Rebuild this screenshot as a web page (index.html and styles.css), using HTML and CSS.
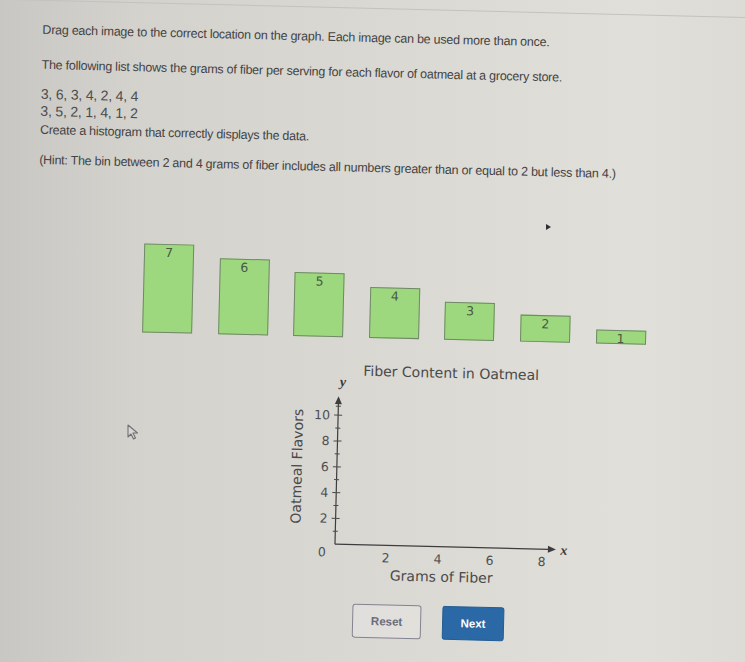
FILE: index.html
```html
<!DOCTYPE html>
<html lang="en">
<head>
    <meta charset="UTF-8">
    <meta name="viewport" content="width=device-width, initial-scale=1.0">
    <title>Fiber Content in Oatmeal</title>
    <link rel="stylesheet" href="styles.css">
</head>
<body>
    <div class="page">
        <div class="frame">
            <p class="line intro">Drag each image to the correct location on the graph. Each image can be used more than once.</p>
            <p class="line lead">The following list shows the grams of fiber per serving for each flavor of oatmeal at a grocery store.</p>
            <div class="data">
                <div>3, 6, 3, 4, 2, 4, 4</div>
                <div>3, 5, 2, 1, 4, 1, 2</div>
            </div>
            <p class="line task">Create a histogram that correctly displays the data.</p>
            <p class="line hint">(Hint: The bin between 2 and 4 grams of fiber includes all numbers greater than or equal to 2 but less than 4.)</p>

            <!-- draggable bars, one per frequency -->
            <div class="tiles">
                <div class="tile" style="height: 89px;">7</div>
                <div class="tile" style="height: 76px;">6</div>
                <div class="tile" style="height: 64px;">5</div>
                <div class="tile" style="height: 51px;">4</div>
                <div class="tile" style="height: 38px;">3</div>
                <div class="tile" style="height: 27px;">2</div>
                <div class="tile" style="height: 14px;">1</div>
            </div>

            <svg class="chart" width="300" height="225" viewBox="0 0 300 225">
                <text class="chart-title" x="172" y="17" text-anchor="middle">Fiber Content in Oatmeal</text>
                <text class="axis-var" x="64" y="28" text-anchor="middle">y</text>
                <text class="axis-var" x="289" y="191" text-anchor="middle">x</text>

                <!-- axes -->
                <line class="axis" x1="60" y1="44" x2="60" y2="186"/>
                <line class="axis" x1="60" y1="186" x2="274" y2="186"/>
                <polygon class="arrow" points="60,38 56.5,46 63.5,46"/>
                <polygon class="arrow" points="281,186 273,182.5 273,189.5"/>

                <!-- y ticks, one per flavor -->
                <g class="ticks">
                    <line x1="57.5" y1="173.1" x2="62.5" y2="173.1"/>
                    <line x1="56" y1="160.2" x2="64" y2="160.2"/>
                    <line x1="57.5" y1="147.3" x2="62.5" y2="147.3"/>
                    <line x1="56" y1="134.4" x2="64" y2="134.4"/>
                    <line x1="57.5" y1="121.5" x2="62.5" y2="121.5"/>
                    <line x1="56" y1="108.6" x2="64" y2="108.6"/>
                    <line x1="57.5" y1="95.7" x2="62.5" y2="95.7"/>
                    <line x1="56" y1="82.8" x2="64" y2="82.8"/>
                    <line x1="57.5" y1="69.9" x2="62.5" y2="69.9"/>
                    <line x1="56" y1="57" x2="64" y2="57"/>
                    <line x1="57.5" y1="48" x2="62.5" y2="48"/>
                </g>

                <g class="tick-labels">
                    <text x="52" y="61.5" text-anchor="end">10</text>
                    <text x="52" y="87.3" text-anchor="end">8</text>
                    <text x="52" y="113.1" text-anchor="end">6</text>
                    <text x="52" y="138.9" text-anchor="end">4</text>
                    <text x="52" y="164.7" text-anchor="end">2</text>
                    <text x="47" y="198.5" text-anchor="middle">0</text>
                    <text x="111" y="203" text-anchor="middle">2</text>
                    <text x="163" y="203" text-anchor="middle">4</text>
                    <text x="215" y="203" text-anchor="middle">6</text>
                    <text x="267" y="203" text-anchor="middle">8</text>
                </g>

                <text class="axis-name" x="167" y="221" text-anchor="middle">Grams of Fiber</text>
                <text class="axis-name" transform="translate(25 109) rotate(-90)" text-anchor="middle">Oatmeal Flavors</text>
            </svg>

            <div class="actions">
                <button class="btn btn-reset">Reset</button>
                <button class="btn btn-next">Next</button>
            </div>
        </div>
    </div>

    <span class="marker"></span>
    <svg class="cursor" width="12" height="17" viewBox="0 0 12 17">
        <path d="M1 1 L1 13 L4 10 L6.5 15 L8.5 14 L6 9 L10.5 9 Z"/>
    </svg>
</body>
</html>
```

FILE: styles.css
```css
body {
    margin: 0;
    padding: 0;
    width: 745px;
    height: 662px;
    overflow: hidden;
    position: relative;
    background: linear-gradient(to right, #c9c7c3 0%, #d4d2cd 18%, #dbd9d4 55%, #e0dfda 85%, #dcdbd6 100%);
    font-family: 'Liberation Sans', Arial, sans-serif;
    color: #434343;
}

/* the whole sheet sits slightly tilted */
.page {
    width: 745px;
    height: 662px;
    transform: rotate(1.4deg);
    transform-origin: 372px 331px;
}

.frame {
    margin-top: 8px;
    border-top: 1px solid #c4c2bd;
    padding-left: 35px;
}

.line {
    margin: 0;
    font-size: 12.5px;
    line-height: 16px;
    letter-spacing: -0.25px;
    white-space: nowrap;
}

.intro {
    margin-top: 21px;
}

.lead {
    margin-top: 19px;
}

.data {
    margin-top: 13px;
    font-size: 14px;
    line-height: 17px;
    letter-spacing: -0.2px;
    color: #4c4c4c;
}

.task {
    margin-top: 2px;
}

.hint {
    margin-top: 14px;
}

.tiles {
    display: flex;
    align-items: flex-end;
    gap: 25.6px;
    margin-top: 73px;
    margin-left: 107px;
    height: 89px;
}

.tile {
    box-sizing: border-box;
    width: 50px;
    background-color: #9dd87e;
    border: 1.5px solid #72886a;
    text-align: center;
    font-family: 'DejaVu Sans', Verdana, sans-serif;
    font-size: 12.5px;
    line-height: 13px;
    padding-top: 1px;
    color: #4a5947;
}

.chart {
    display: block;
    margin-top: 21px;
    margin-left: 245px;
    font-family: 'DejaVu Sans', Verdana, sans-serif;
    overflow: visible;
}

.chart-title,
.axis-name {
    font-size: 14px;
    fill: #4a4a4a;
}

.axis-var {
    font-family: 'Liberation Serif', 'Times New Roman', serif;
    font-style: italic;
    font-weight: bold;
    font-size: 14px;
    fill: #3a3a3a;
}

.axis {
    stroke: #3d3d3d;
    stroke-width: 1.2;
}

.arrow {
    fill: #3d3d3d;
}

.ticks line {
    stroke: #4a4a4a;
    stroke-width: 1;
}

.tick-labels text {
    font-size: 12.5px;
    fill: #4f4f4f;
}

.actions {
    display: flex;
    gap: 21px;
    margin-top: 20px;
    margin-left: 324px;
}

.btn {
    box-sizing: border-box;
    height: 34px;
    border-radius: 3px;
    font-family: 'Liberation Sans', Arial, sans-serif;
    font-weight: bold;
    font-size: 11.5px;
    cursor: pointer;
}

.btn-reset {
    width: 69px;
    background-color: rgba(255, 255, 255, 0.18);
    border: 1.5px solid #858291;
    color: #6a6c7d;
}

.btn-next {
    width: 62px;
    background-color: #2a68a6;
    border: 1px solid #245c94;
    color: #ffffff;
}

/* stray pointer on the sheet */
.marker {
    position: absolute;
    left: 546px;
    top: 224px;
    width: 0;
    height: 0;
    border-top: 3px solid transparent;
    border-bottom: 3px solid transparent;
    border-left: 5px solid #2e2e34;
}

.cursor {
    position: absolute;
    left: 127px;
    top: 424px;
}

.cursor path {
    fill: #d8d7d3;
    stroke: #707070;
    stroke-width: 1.1;
    stroke-linejoin: round;
}
```
